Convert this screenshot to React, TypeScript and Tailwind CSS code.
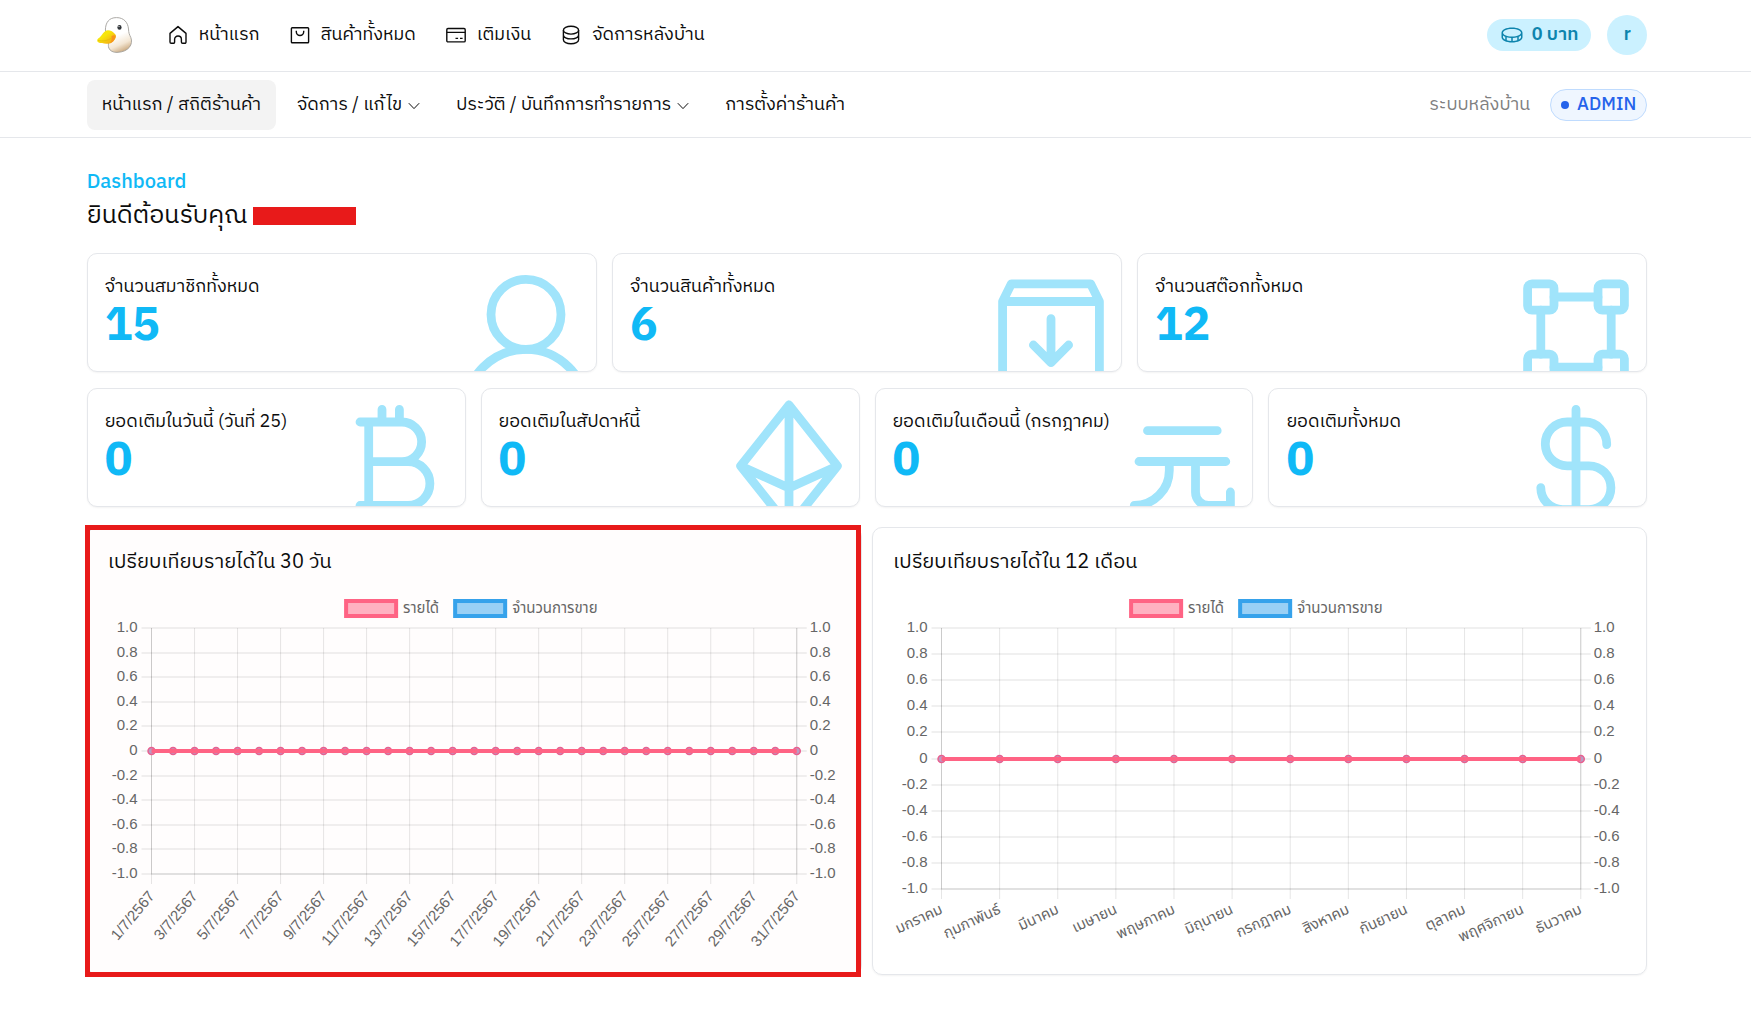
import React from 'react';
import { PiCoin } from 'react-icons/pi';

const days = Array.from({ length: 31 }, (_, i) => `${i + 1}/7/2567`);
const months = [
  'มกราคม',
  'กุมภาพันธ์',
  'มีนาคม',
  'เมษายน',
  'พฤษภาคม',
  'มิถุนายน',
  'กรกฎาคม',
  'สิงหาคม',
  'กันยายน',
  'ตุลาคม',
  'พฤศจิกายน',
  'ธันวาคม',
];
const ticks = ['1.0', '0.8', '0.6', '0.4', '0.2', '0', '-0.2', '-0.4', '-0.6', '-0.8', '-1.0'];

/* ---------- small icons ---------- */

const NavIcon: React.FC<{ children: React.ReactNode }> = ({ children }) => (
  <svg
    viewBox="0 0 20 20"
    className="size-5 shrink-0"
    fill="none"
    stroke="currentColor"
    strokeWidth="1.4"
    strokeLinejoin="round"
    aria-hidden="true"
  >
    {children}
  </svg>
);

const HomeIcon = () => (
  <NavIcon>
    <path d="M2 8.4 10 1.6l8 6.8v8.7a1.2 1.2 0 0 1-1.2 1.2h-2.2a1.2 1.2 0 0 1-1.2-1.2v-2.7a3.4 3.4 0 0 0-6.8 0v2.7a1.2 1.2 0 0 1-1.2 1.2H3.2A1.2 1.2 0 0 1 2 17.1z" />
  </NavIcon>
);

const BagIcon = () => (
  <NavIcon>
    <rect x="1.4" y="2.8" width="17.2" height="14.9" rx=".8" />
    <path d="M6.3 5.8v1a3.7 3.7 0 0 0 7.4 0v-1" />
  </NavIcon>
);

const CardIcon = () => (
  <NavIcon>
    <rect x=".8" y="3.5" width="18.4" height="13.4" rx="1.2" />
    <path d="M.8 7.4h18.4M9.5 13.4h2.6M14 13.4h2.6" />
  </NavIcon>
);

const DatabaseIcon = () => (
  <NavIcon>
    <ellipse cx="10" cy="5.2" rx="7.6" ry="3.9" />
    <path d="M2.4 5.2v9.6c0 2.2 3.4 3.9 7.6 3.9s7.6-1.7 7.6-3.9V5.2M2.4 10c0 2.2 3.4 3.9 7.6 3.9s7.6-1.7 7.6-3.9" />
  </NavIcon>
);

const ChevronDown = () => (
  <svg viewBox="0 0 12 12" className="mt-0.5 size-3" fill="none" stroke="currentColor" aria-hidden="true">
    <path d="m.8 3.2 5.2 5.4 5.2-5.4" />
  </svg>
);

const DuckLogo = () => (
  <svg viewBox="0 0 36 36" className="size-9" role="img" aria-label="Logo">
    <defs>
      <linearGradient id="duck" x1=".35" y1=".1" x2=".65" y2="1">
        <stop offset=".45" stopColor="#fff" />
        <stop offset=".75" stopColor="#f3e6d3" />
        <stop offset="1" stopColor="#c9a77c" />
      </linearGradient>
      <linearGradient id="bill" x1="0" y1="0" x2="1" y2="1">
        <stop offset=".4" stopColor="#f7e50c" />
        <stop offset="1" stopColor="#f39a16" />
      </linearGradient>
    </defs>
    <path
      d="M8.4 13C8.5 5.500 12 .6 19.500 .6c7.500 0 11.500 5 12 11.400.2 4 .9 5.500 2.300 8.500 2.600 6.500-1.800 14.500-13.800 14.900-3.800.1-7-1.400-8.200-4.400-.6-1.700-.4-3.400-.2-5z"
      fill="url(#duck)"
      stroke="#a3a09c"
      strokeWidth=".9"
    />
    <path
      d="M11 13.200c2.500 0 5.400 1.600 7.400 4.200 1 1.400.6 3.400-.8 5.400-1.900 3-4.600 4.300-8 4-3.500-.2-6.300-.2-8.400-1.500-1.500-1-1.300-2.900.3-4 3.200-1.900 5.300-8.100 9.500-8.100z"
      fill="url(#bill)"
    />
    <path d="M1 23.400c4.500 1 9.500.6 13.500-2.400" fill="none" stroke="#e0b80c" strokeWidth=".7" />
    <path d="M14.500 19c1.800-1 3.600-.9 4.100-.2.300 2.400-2.600 6.600-5.800 7.600 1.600-2.200 2.300-4.400 1.700-7.400z" fill="#f7941d" />
    <ellipse cx="22.500" cy="10.400" rx="2.100" ry="2.300" fill="#2f3338" />
    <circle cx="22" cy="9.600" r=".6" fill="#fff" />
  </svg>
);

/* ---------- stat cards ---------- */

interface StatCardProps {
  label: string;
  value: number;
  children: React.ReactNode;
}

const StatCard: React.FC<StatCardProps> = ({ label, value, children }) => (
  <div className="relative h-[119px] overflow-hidden rounded-[10px] border border-gray-200 bg-white p-[17px] shadow-xs">
    <svg
      viewBox="0 0 132 132"
      className="absolute top-2 right-1 size-[132px]"
      fill="none"
      stroke="#a0e4fb"
      strokeWidth="8.8"
      strokeLinecap="round"
      strokeLinejoin="round"
      aria-hidden="true"
    >
      {children}
    </svg>
    <p className="relative text-lg leading-8">{label}</p>
    <p className="relative text-[46px] leading-12 font-bold text-[#10b9f6]">{value}</p>
  </div>
);

/* ---------- charts ---------- */

interface LineChartProps {
  labels: string[];
  every: number;
  left: number;
  right: number;
  bottom: number;
  angle: number;
}

const TOP = 52;

const LineChart: React.FC<LineChartProps> = ({ labels, every, left, right, bottom, angle }) => {
  const xAt = (i: number) => left + ((right - left) * i) / (labels.length - 1);
  const yAt = (i: number) => Math.round(TOP + ((bottom - TOP) * i) / (ticks.length - 1));
  const zero = yAt(5);

  return (
    <svg
      viewBox="0 2 733 376"
      className="block w-full overflow-visible font-['Liberation_Sans','Noto_Sans_Thai',sans-serif] text-[15px]"
      fill="#666"
      role="img"
    >
      <rect x="238" y="25" width="50" height="15" fill="#ffb1c1" stroke="#ff6384" strokeWidth="4" />
      <text x="295" y="37">รายได้</text>
      <rect x="347" y="25" width="50" height="15" fill="#9ad0f5" stroke="#36a2eb" strokeWidth="4" />
      <text x="404" y="37">จำนวนการขาย</text>

      {ticks.map((tick, i) => (
        <g key={tick}>
          <path d={`M${left - 10} ${yAt(i)}H${right + 10}`} stroke="#000" strokeOpacity=".12" />
          <text x={left - 14} y={yAt(i) + 4} textAnchor="end">{tick}</text>
          <text x={right + 13} y={yAt(i) + 4}>{tick}</text>
        </g>
      ))}

      {labels.map((label, i) =>
        i % every === 0 ? (
          <g key={label}>
            <path d={`M${xAt(i)} ${TOP}V${bottom + 10}`} stroke="#000" strokeOpacity=".1" />
            <text transform={`translate(${xAt(i)} ${bottom + 19}) rotate(${-angle})`} y="5" textAnchor="end">
              {label}
            </text>
          </g>
        ) : null
      )}

      <path d={`M${left} ${TOP}V${bottom}H${right}V${TOP}`} fill="none" stroke="#000" strokeOpacity=".12" />

      {labels.map((label, i) => (
        <circle key={label} cx={xAt(i)} cy={zero} r="3.500" fill="#b99cc4" stroke="#e8608f" strokeWidth="1.500" />
      ))}
      <path d={`M${left} ${zero}H${right}`} stroke="#ff6384" strokeWidth="4" />
    </svg>
  );
};

const navLinks = [
  { label: 'หน้าแรก', icon: <HomeIcon /> },
  { label: 'สินค้าทั้งหมด', icon: <BagIcon /> },
  { label: 'เติมเงิน', icon: <CardIcon /> },
  { label: 'จัดการหลังบ้าน', icon: <DatabaseIcon /> },
];

export default function App() {
  return (
    <div className="min-h-screen bg-white font-['IBM_Plex_Sans_Thai','Roboto','Noto_Sans_Thai',sans-serif] text-lg text-[#0c0c0c]">
      <header className="border-b border-gray-200 pr-[17px]">
        <div className="mx-auto flex h-[71px] w-9/10 items-center justify-between pb-0.5">
          <div className="flex items-center gap-[35px] pl-2.5">
            <a href="#">
              <DuckLogo />
            </a>
            <nav className="flex items-center gap-[30px]">
              {navLinks.map(({ label, icon }) => (
                <a key={label} href="#" className="flex items-center gap-[11px]">
                  {icon}
                  {label}
                </a>
              ))}
            </nav>
          </div>
          <div className="flex items-center gap-4 font-semibold text-[#0d84ad]">
            <button className="flex h-8 items-center gap-2 rounded-full bg-[#cbf1ff] px-[13px]">
              <PiCoin className="size-6" />
              0 บาท
            </button>
            <button className="size-10 rounded-full bg-[#cbf1ff]">r</button>
          </div>
        </div>
      </header>

      <div className="border-b border-gray-200 pr-[17px]">
        <div className="mx-auto flex w-9/10 items-center justify-between pt-2 pb-[7px]">
          <nav className="flex items-center gap-1.5">
            <a href="#" className="flex h-[50px] items-center rounded-lg bg-[#f3f3f3] px-[15px]">
              หน้าแรก / สถิติร้านค้า
            </a>
            <button className="flex h-[50px] items-center gap-1.5 px-[15px]">
              จัดการ / แก้ไข
              <ChevronDown />
            </button>
            <button className="flex h-[50px] items-center gap-1.5 px-[15px]">
              ประวัติ / บันทึกการทำรายการ
              <ChevronDown />
            </button>
            <a href="#" className="flex h-[50px] items-center px-[15px]">
              การตั้งค่าร้านค้า
            </a>
          </nav>
          <div className="flex items-center gap-5">
            <span className="text-[#808080]">ระบบหลังบ้าน</span>
            <span className="flex h-8 items-center gap-2 rounded-full border border-[#bfdbfe] bg-[#eff6ff] px-2.5 font-medium text-[#2563eb]">
              <span className="size-2 rounded-full bg-[#2563eb]" />
              ADMIN
            </span>
          </div>
        </div>
      </div>

      <main className="pr-[17px]">
        <div className="mx-auto w-9/10 pt-[30px]">
          <p className="text-xl leading-[30px] font-medium text-[#10b9f6]">Dashboard</p>
          <h1 className="flex items-center gap-1.5 text-[25px] leading-9">
            ยินดีต้อนรับคุณ
            <span className="h-[18px] w-[103px] bg-[#e81a1a]" />
          </h1>

          <div className="mt-[19px] grid grid-cols-3 gap-[15px]">
            <StatCard label="จำนวนสมาชิกทั้งหมด" value={15}>
              <circle cx="66" cy="52.400" r="35" />
              <circle cx="66" cy="148" r="60.600" />
            </StatCard>
            <StatCard label="จำนวนสินค้าทั้งหมด" value={6}>
              <path d="M17.600 130V39.500l8.800-17.700h79.200l8.800 17.700V130M17.600 39.500h96.800M66 56.700v43.900M48.400 83 66 100.600 83.600 83" />
            </StatCard>
            <StatCard label="จำนวนสต๊อกทั้งหมด" value={12}>
              <rect x="17.600" y="21.800" width="26.400" height="26.400" rx="4.400" />
              <rect x="88" y="21.800" width="26.400" height="26.400" rx="4.400" />
              <rect x="17.600" y="92.200" width="26.400" height="26.400" rx="4.400" />
              <rect x="88" y="92.200" width="26.400" height="26.400" rx="4.400" />
              <path d="M44 35h44M44 105.200h44M30.800 48.200v44M101.200 48.200v44" />
            </StatCard>
          </div>

          <div className="mt-4 grid grid-cols-4 gap-[15px]">
            <StatCard label="ยอดเติมในวันนี้ (วันที่ 25)" value={0}>
              <path d="M31 25h41.800a19.850 19.850 0 0 1 0 39.700H39.700M72.800 64.700H79a21.900 21.900 0 0 1 0 43.800H31M39.700 25v83.500M53 12.400V25M70.400 12.400V25" />
            </StatCard>
            <StatCard label="ยอดเติมในสัปดาห์นี้" value={0}>
              <path d="M66 8 17.600 69 66 130l48.400-61zM66 8v122M17.600 69 66 91l48.400-22" />
            </StatCard>
            <StatCard label="ยอดเติมในเดือนนี้ (กรกฎาคม)" value={0}>
              <path d="M31.500 33.700h69.700M23 64.500h86.800M53.300 64.500V73.400a35 35 0 0 1-35 35M79.500 64.500v30.700a13.200 13.200 0 0 0 13.200 13.200h21.700V95" />
            </StatCard>
            <StatCard label="ยอดเติมทั้งหมด" value={0}>
              <path d="M66 12.400V130M96.700 47.600A22 22 0 0 0 74.800 25H57.200a21.900 21.900 0 0 0 0 43.800H79a21.900 21.900 0 0 1 0 43.800H52.700a21.900 21.900 0 0 1-21.900-21.900" />
            </StatCard>
          </div>

          <div className="mt-5 grid grid-cols-2 gap-2.5">
            <section className="relative rounded-[10px] border border-gray-200 bg-[#fffdfd] p-5">
              <h2 className="text-xl leading-[30px]">เปรียบเทียบรายได้ใน 30 วัน</h2>
              <LineChart labels={days} every={2} left={43.5} right={688.5} bottom={298} angle={50} />
              <div className="pointer-events-none absolute -inset-y-[3px] right-0 -left-[3px] border-5 border-[#e81a1a]" />
            </section>
            <section className="rounded-[10px] border border-gray-200 p-5 shadow-xs">
              <h2 className="text-xl leading-[30px]">เปรียบเทียบรายได้ใน 12 เดือน</h2>
              <LineChart labels={months} every={1} left={48.5} right={687.5} bottom={313} angle={25} />
            </section>
          </div>
        </div>
      </main>
    </div>
  );
}
